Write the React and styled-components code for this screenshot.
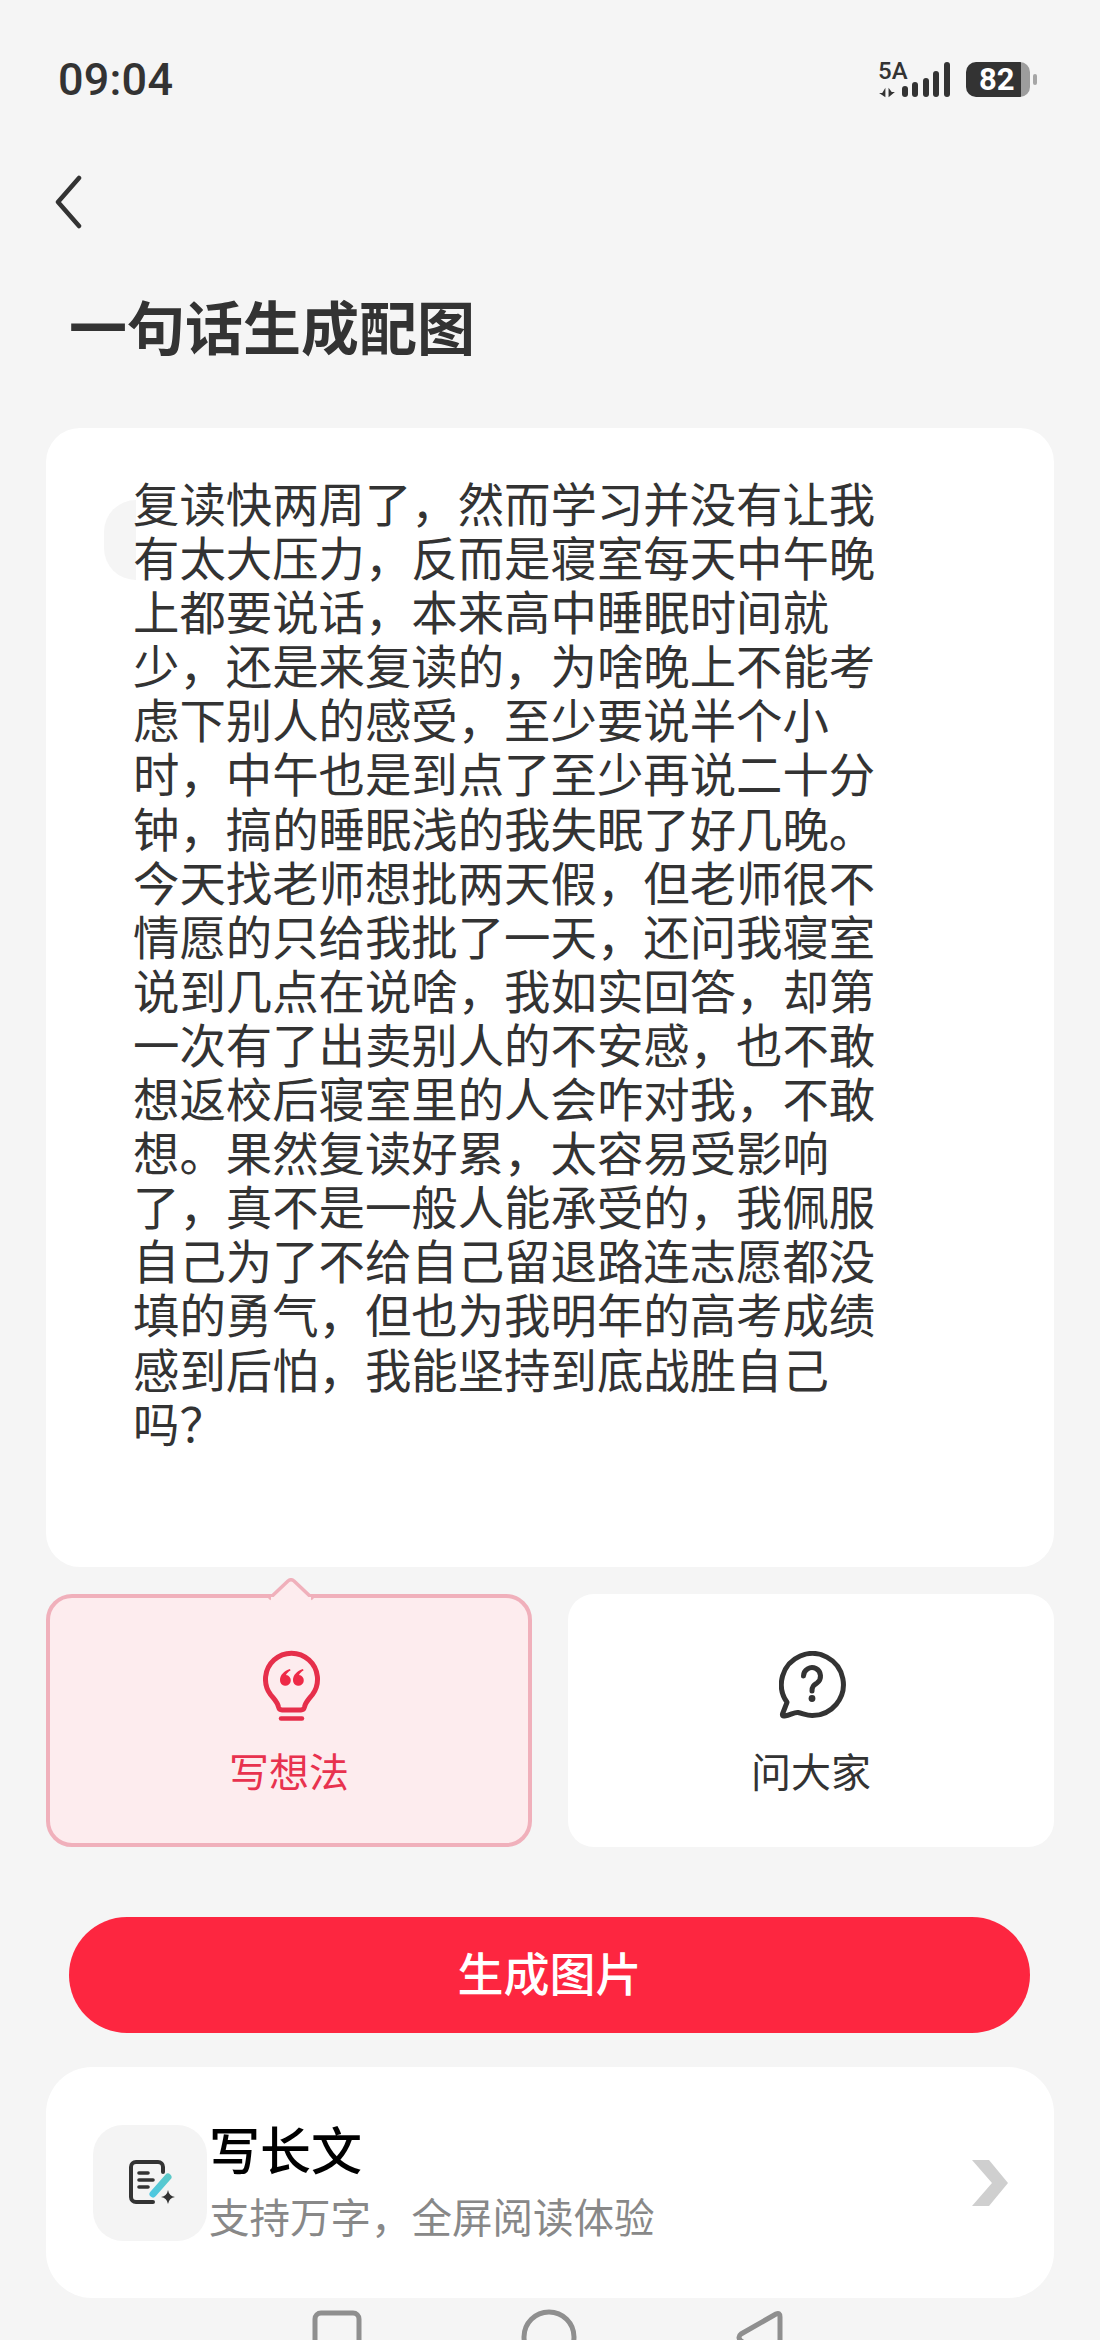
import React from "react";
import styled, { createGlobalStyle } from "styled-components";

const GlobalStyle = createGlobalStyle`
  html, body { margin: 0; padding: 0; background: #f5f5f5; }
  * { box-sizing: border-box; }
`;

const CJK = `"Noto Sans CJK SC", "Noto Sans", sans-serif`;

const Page = styled.div`
  width: 1100px;
  height: 2340px;
  overflow: hidden;
  background: #f5f5f5;
  display: flex;
  flex-direction: column;
  font-family: ${CJK};
  color: #333;
  & > * { flex-shrink: 0; }
`;

const StatusBar = styled.div`
  margin-top: 62px;
  padding: 0 63px 0 58px;
  height: 36px;
  display: flex;
  align-items: center;
  justify-content: space-between;
`;

const Time = styled.span`
  font-family: Roboto, sans-serif;
  font-weight: 500;
  font-size: 45px;
  line-height: 36px;
  letter-spacing: 0.2px;
  color: #333;
`;

const StatusIcons = styled.div`
  display: flex;
  align-items: stretch;
  height: 36px;
`;

const NetworkStack = styled.div`
  width: 26px;
  display: flex;
  flex-direction: column;
  justify-content: space-between;
  align-items: flex-start;
  padding-left: 2px;
`;

const NetworkLabel = styled.span`
  font-family: Roboto, sans-serif;
  font-weight: 500;
  font-size: 24px;
  line-height: 19px;
  color: #333;
`;

const Battery = styled.div`
  width: 64px;
  height: 35px;
  margin-left: 14px;
  border-radius: 10px;
  background: linear-gradient(to right, #333 0 55px, #9d9d9d 55px);
  color: #fff;
  font-family: Roboto, sans-serif;
  font-weight: 700;
  font-size: 31px;
  line-height: 35px;
  padding-left: 13px;
`;

const BatteryNub = styled.div`
  width: 4px;
  height: 11px;
  margin: 12px 0 0 3px;
  border-radius: 2px;
  background: #a6a6a6;
`;

const BackButton = styled.div`
  margin: 77px 0 0 53px;
  width: 30px;
  height: 54px;
`;

const Title = styled.h1`
  margin: 64px 0 0 69px;
  font-size: 58px;
  line-height: 64px;
  font-weight: 700;
  color: #333;
`;

const EditorCard = styled.div`
  position: relative;
  margin: 71px 46px 0;
  height: 1139px;
  background: #fff;
  border-radius: 34px;
  padding: 47px 0 0 87px;
`;

const GhostAvatar = styled.div`
  position: absolute;
  left: 58px;
  top: 72px;
  width: 32px;
  height: 80px;
  border-radius: 40px 0 0 40px;
  background: #f5f5f5;
`;

const BodyText = styled.p`
  position: relative;
  margin: 0;
  width: 746px;
  font-size: 46.4px;
  line-height: 54.1px;
  font-weight: 400;
  color: #333;
`;

const ModeGrid = styled.div`
  margin: 27px 46px 0;
  display: grid;
  grid-template-columns: 486px 486px;
  gap: 36px;
  height: 253px;
`;

const ModeTile = styled.div`
  position: relative;
  border-radius: 26px;
  background: ${(p) => (p.$active ? "#fdecee" : "#fff")};
  border: ${(p) => (p.$active ? "4px solid #f0b0bb" : "none")};
  display: flex;
  flex-direction: column;
  align-items: center;
  padding-top: ${(p) => (p.$active ? "50px" : "54px")};
`;

const Notch = styled.svg`
  position: absolute;
  left: 218px;
  top: -20px;
`;

const ModeIcon = styled.div`
  height: 74px;
  padding-left: ${(p) => (p.$active ? "6px" : "4px")};
  display: flex;
  align-items: center;
  justify-content: center;
`;

const ModeLabel = styled.span`
  margin-top: 24px;
  font-size: 40px;
  line-height: 48px;
  color: ${(p) => (p.$active ? "#e8324e" : "#333")};
`;

const GenerateButton = styled.button`
  margin: 70px 70px 0 69px;
  height: 116px;
  border: none;
  border-radius: 58px;
  background: #fd2640;
  color: #fff;
  font-family: ${CJK};
  font-size: 46px;
  font-weight: 500;
  padding: 0 0 8px;
`;

const LongPostCard = styled.div`
  margin: 34px 46px 0;
  height: 231px;
  background: #fff;
  border-radius: 46px;
  padding: 0 46px 0 47px;
  display: flex;
  align-items: center;
`;

const LongPostIcon = styled.div`
  width: 114px;
  height: 116px;
  padding-left: 6px;
  border-radius: 30px;
  background: #f4f4f4;
  display: flex;
  align-items: center;
  justify-content: center;
  flex-shrink: 0;
`;

const LongPostText = styled.div`
  margin: 0 0 8px 2px;
  display: flex;
  flex-direction: column;
`;

const LongPostTitle = styled.span`
  font-size: 51px;
  line-height: 60px;
  font-weight: 500;
  color: #000;
`;

const LongPostHint = styled.span`
  margin-top: 14px;
  font-size: 40.5px;
  line-height: 48px;
  color: #888;
`;

const Chevron = styled.svg`
  margin-left: auto;
`;

const NavBar = styled.div`
  margin-top: 11px;
  padding-left: 311px;
  display: flex;
  align-items: flex-start;
  gap: 158px;
`;

const NavGlyph = styled.svg`
  flex-shrink: 0;
`;

const bars = [
  [3, 11],
  [13, 15],
  [24, 19],
  [34, 26],
  [45, 35],
];

const text =
  "复读快两周了，然而学习并没有让我有太大压力，反而是寝室每天中午晚上都要说话，本来高中睡眠时间就少，还是来复读的，为啥晚上不能考虑下别人的感受，至少要说半个小时，中午也是到点了至少再说二十分钟，搞的睡眠浅的我失眠了好几晚。今天找老师想批两天假，但老师很不情愿的只给我批了一天，还问我寝室说到几点在说啥，我如实回答，却第一次有了出卖别人的不安感，也不敢想返校后寝室里的人会咋对我，不敢想。果然复读好累，太容易受影响了，真不是一般人能承受的，我佩服自己为了不给自己留退路连志愿都没填的勇气，但也为我明年的高考成绩感到后怕，我能坚持到底战胜自己吗？";

export default function App() {
  return (
    <Page>
      <GlobalStyle />
      <StatusBar>
        <Time>09:04</Time>
        <StatusIcons>
          <NetworkStack>
            <NetworkLabel>5A</NetworkLabel>
            <svg width="19" height="11" viewBox="0 0 18 10">
              <path d="M7 0.5V9.5L1 5.5H4Z M10 0.5V9.5L16 4.5H13Z" fill="#333" />
            </svg>
          </NetworkStack>
          <svg width="50" height="36" viewBox="0 0 50 36">
            {bars.map(([x, h]) => (
              <rect key={x} x={x - 3} y={35 - h} width="6" height={h} rx="3" fill="#333" />
            ))}
          </svg>
          <Battery>82</Battery>
          <BatteryNub />
        </StatusIcons>
      </StatusBar>

      <BackButton>
        <svg width="30" height="54" viewBox="0 0 30 54" fill="none">
          <path d="M26 3 L5 27 L26 51" stroke="#333" strokeWidth="4.5" strokeLinecap="round" strokeLinejoin="round" />
        </svg>
      </BackButton>

      <Title>一句话生成配图</Title>

      <EditorCard>
        <GhostAvatar />
        <BodyText>{text}</BodyText>
      </EditorCard>

      <ModeGrid>
        <ModeTile $active>
          <Notch width="46" height="24" viewBox="0 0 46 24" fill="none">
            <path d="M1 21 L20 3 Q23 0.5 26 3 L45 21" fill="#fdecee" stroke="#f0b0bb" strokeWidth="3.5" strokeLinejoin="round" />
            <rect x="3" y="19" width="40" height="5" fill="#fdecee" />
          </Notch>
          <ModeIcon $active>
            <svg width="58" height="74" viewBox="0 0 58 74" fill="none">
              <path
                d="M19 62 C17 62 16 61 15.5 59 C14.5 54 11 51 7.5 46.5 A 26 26 0 1 1 49.5 46.5 C46 51 42.5 54 41.5 59 C41 61 40 62 38 62 Z"
                stroke="#e62f4b"
                strokeWidth="5"
                strokeLinejoin="round"
              />
              <path d="M18 70.5H39" stroke="#e62f4b" strokeWidth="4.5" strokeLinecap="round" />
              <path
                d="M27 21 C21 23 17 27 17 32 A5.4 5.4 0 1 0 23 27 C24 25 25.5 23.5 27.5 22.5 Z M40 21 C34 23 30 27 30 32 A5.4 5.4 0 1 0 36 27 C37 25 38.5 23.5 40.5 22.5 Z"
                fill="#ee2a47"
              />
            </svg>
          </ModeIcon>
          <ModeLabel $active>写想法</ModeLabel>
        </ModeTile>
        <ModeTile>
          <ModeIcon>
            <svg width="68" height="68" viewBox="0 0 68 68" fill="none">
              <path
                d="M33 64.5 A31 31 0 1 0 8 51.3 L3.5 63 Q3 65.5 5.5 65 C12 64 15 61 19 61.5 C24 62.5 28 64.5 33 64.5 Z"
                stroke="#333"
                strokeWidth="5"
                strokeLinejoin="round"
              />
              <path d="M24.5 25 A8.5 8.5 0 1 1 38 32 C35 34 33 35 33 40" stroke="#333" strokeWidth="5" strokeLinecap="round" />
              <circle cx="33" cy="47.5" r="3.4" fill="#333" />
            </svg>
          </ModeIcon>
          <ModeLabel>问大家</ModeLabel>
        </ModeTile>
      </ModeGrid>

      <GenerateButton>生成图片</GenerateButton>

      <LongPostCard>
        <LongPostIcon>
          <svg width="48" height="48" viewBox="0 0 48 48" fill="none">
            <defs>
              <linearGradient id="pencil" x1="40" y1="17" x2="23" y2="35" gradientUnits="userSpaceOnUse">
                <stop offset="0" stopColor="#5cc9c8" />
                <stop offset="1" stopColor="#4fc8e0" />
              </linearGradient>
            </defs>
            <path d="M34 13 V8 a5 5 0 0 0 -5 -5 H7 a5 5 0 0 0 -5 5 V38 a5 5 0 0 0 5 5 H24" stroke="#333" strokeWidth="4" strokeLinecap="round" />
            <path d="M10 14H19 M10 21H24 M10 28H19" stroke="#333" strokeWidth="3.6" strokeLinecap="round" />
            <path d="M39 18 L24 35" stroke="url(#pencil)" strokeWidth="7" strokeLinecap="round" />
            <path d="M39 31 Q40 37 46 38 Q40 39 39 45 Q38 39 32 38 Q38 37 39 31 Z" fill="#333" />
          </svg>
        </LongPostIcon>
        <LongPostText>
          <LongPostTitle>写长文</LongPostTitle>
          <LongPostHint>支持万字，全屏阅读体验</LongPostHint>
        </LongPostText>
        <Chevron width="36" height="46" viewBox="0 0 36 46">
          <path d="M0 0 H17 L36 23 L17 46 H0 L20 23 Z" fill="#cfcfcf" />
        </Chevron>
      </LongPostCard>

      <NavBar>
        <NavGlyph width="52" height="60" viewBox="0 0 52 60" fill="none">
          <rect x="4" y="4" width="44" height="50" rx="6" stroke="#8f8f8f" strokeWidth="5" />
        </NavGlyph>
        <NavGlyph width="56" height="60" viewBox="0 0 56 60" fill="none">
          <circle cx="28" cy="28" r="25" stroke="#8f8f8f" strokeWidth="5" />
        </NavGlyph>
        <NavGlyph width="48" height="60" viewBox="0 0 48 60" fill="none">
          <path d="M41 5 Q45 3 45 8 V50 Q45 55 41 53 L6 32 Q2 28 6 25 Z" stroke="#8f8f8f" strokeWidth="5" strokeLinejoin="round" />
        </NavGlyph>
      </NavBar>
    </Page>
  );
}
